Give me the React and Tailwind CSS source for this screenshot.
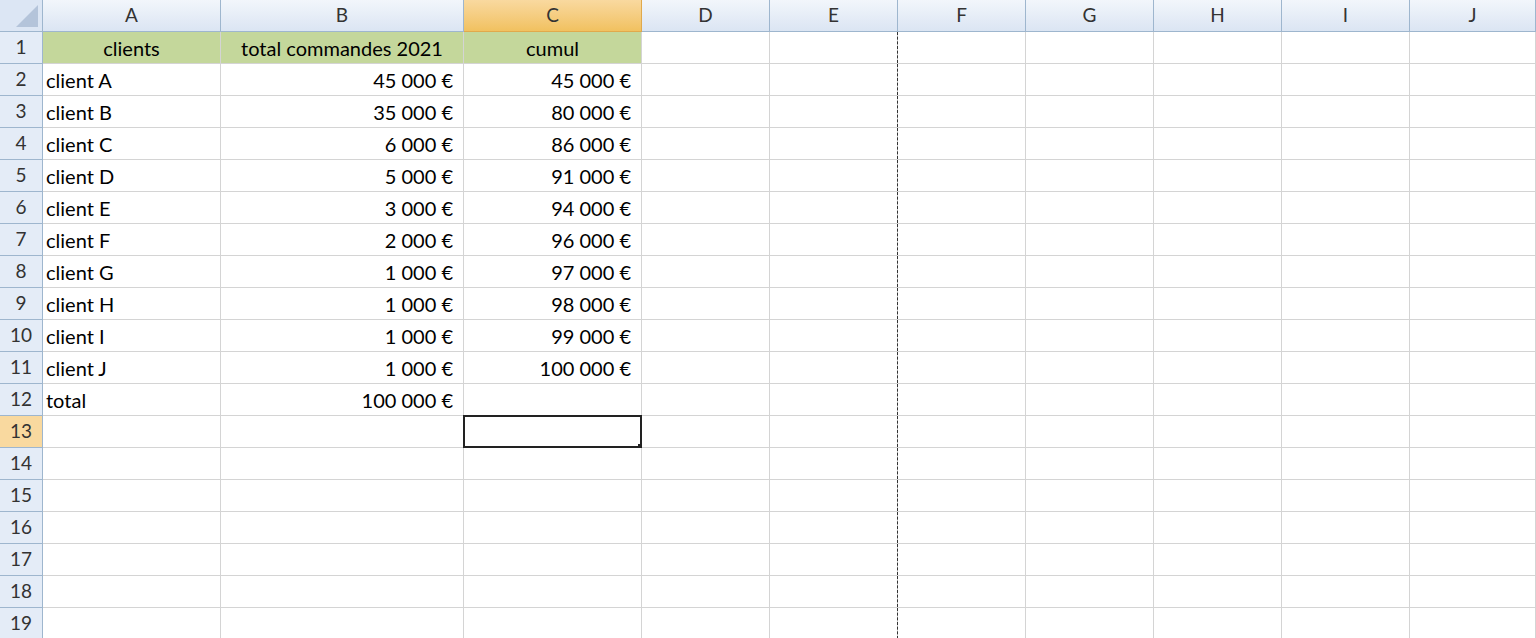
const cols = ["A", "B", "C", "D", "E", "F", "G", "H", "I", "J"]
const widths = [178, 243, 178, 128, 128, 128, 128, 128, 128, 126]

const data = [
  ["client A", "45 000 €", "45 000 €"],
  ["client B", "35 000 €", "80 000 €"],
  ["client C", "6 000 €", "86 000 €"],
  ["client D", "5 000 €", "91 000 €"],
  ["client E", "3 000 €", "94 000 €"],
  ["client F", "2 000 €", "96 000 €"],
  ["client G", "1 000 €", "97 000 €"],
  ["client H", "1 000 €", "98 000 €"],
  ["client I", "1 000 €", "99 000 €"],
  ["client J", "1 000 €", "100 000 €"],
  ["total", "100 000 €", ""],
]

function Row({ n, children }) {
  const sel = n === 13
  return (
    <div className="flex h-[32px]">
      <div className={`w-[43px] shrink-0 flex items-center justify-center border-r border-b border-[#9eb6ce] text-[19px] ${sel ? "bg-[#f9d99f]" : "bg-[#e4ecf7]"} text-[#333]`}>
        {n}
      </div>
      {children}
    </div>
  )
}

export default function App() {
  const rows = []
  for (let n = 1; n <= 19; n++) {
    let vals = ["", "", ""]
    if (n === 1) vals = ["clients", "total commandes 2021", "cumul"]
    else if (n <= 12) vals = data[n - 2]
    rows.push(
      <Row key={n} n={n}>
        {widths.map((w, i) => {
          const v = vals[i] || ""
          const head = n === 1 && i < 3
          const align = head ? "justify-center" : i === 0 ? "justify-start pl-[3px]" : "justify-end pr-[10px]"
          return (
            <div
              key={i}
              style={{ width: w }}
              className={`shrink-0 relative flex items-center border-r border-b border-[#d4d4d4] ${align} ${head ? "bg-[#c4d79b]" : "bg-white"}`}
            >
              {v}
              {i === 4 && <div className="absolute right-[-1px] top-0 bottom-0 border-r border-dashed border-[#333]" />}
              {n === 13 && i === 2 && (
                <div className="absolute -left-[1px] -top-[1px] right-[-1px] bottom-[-1px] border-2 border-[#222]">
                  <div className="absolute -right-[3px] -bottom-[3px] w-[5px] h-[5px] bg-[#222]" />
                </div>
              )}
            </div>
          )
        })}
      </Row>
    )
  }
  return (
    <div className="w-[1536px] h-[638px] overflow-hidden bg-white text-[20px] text-black" style={{ fontFamily: "Lato, 'Open Sans', sans-serif" }}>
      <div className="flex h-[32px] text-[19px]">
        <div className="w-[43px] shrink-0 border-r border-b border-[#9eb6ce] bg-[#dce6f4] relative">
          <div className="absolute right-[4px] bottom-[4px] w-0 h-0 border-l-[22px] border-l-transparent border-b-[22px] border-b-[#b4c4da]" />
        </div>
        {cols.map((c, i) => (
          <div
            key={c}
            style={{ width: widths[i] }}
            className={`shrink-0 flex items-center justify-center border-r border-b text-[#333] ${c === "C" ? "bg-gradient-to-b from-[#f9d99f] to-[#f1c15f] border-[#e0a94c]" : "bg-gradient-to-b from-[#f2f6fb] to-[#dbe5f3] border-[#9eb6ce]"}`}
          >
            {c}
          </div>
        ))}
      </div>
      {rows}
    </div>
  )
}
